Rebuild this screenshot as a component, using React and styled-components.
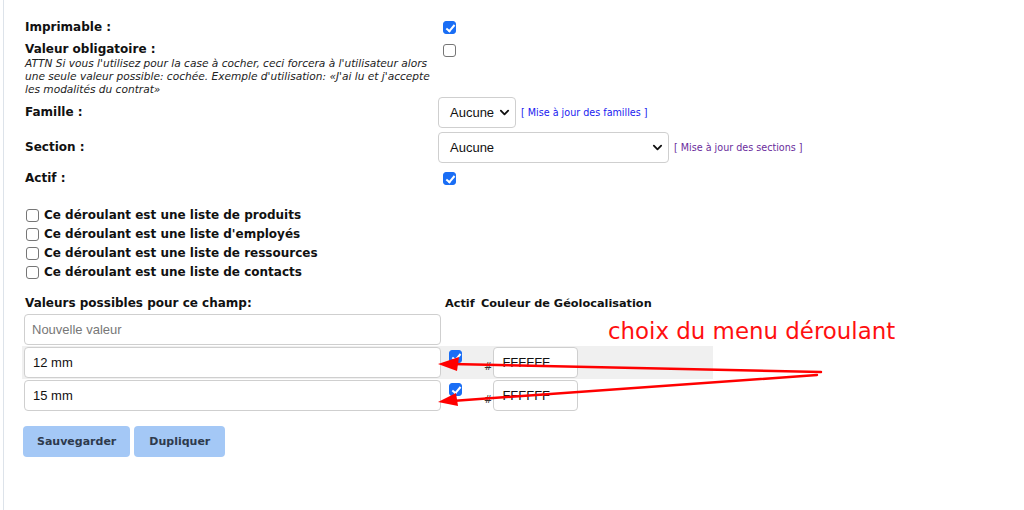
import React from "react";
import styled, { createGlobalStyle, css } from "styled-components";

const GlobalStyle = createGlobalStyle`
  html, body {
    margin: 0;
    padding: 0;
    background: #fff;
    font-family: "DejaVu Sans", Verdana, sans-serif;
    color: #111;
  }
`;

const Page = styled.div`
  position: relative;
  height: 510px;
  overflow: hidden;
  border-left: 1px solid #dde3ea;
  margin-left: 3px;
  padding: 19px 0 0 21px;
  box-sizing: border-box;
`;

const LeftStrip = styled.div`
  position: absolute;
  left: -4px;
  top: 130px;
  width: 3px;
  height: 1px;
  background: #d6dbe2;
`;

const FieldRow = styled.div`
  display: flex;
  align-items: ${(p) => (p.$top ? "flex-start" : "center")};
  min-height: ${(p) => p.$h || 0}px;
  margin-bottom: ${(p) => p.$gap || 0}px;
`;

const LabelCell = styled.div`
  width: 413px;
  flex: none;
`;

const Label = styled.div`
  font-weight: bold;
  font-size: 12px;
  line-height: 15px;
`;

const Hint = styled.div`
  font-style: italic;
  font-size: 10.6px;
  line-height: 12.8px;
  width: 408px;
  color: #222;
`;

const Check = styled.input.attrs({ type: "checkbox" })`
  appearance: none;
  width: 13px;
  height: 13px;
  margin: ${(p) => p.$m || "0"};
  border-radius: 3px;
  box-sizing: border-box;
  border: 1px solid #767676;
  background: #fff;
  flex: none;
  position: relative;
  ${(p) =>
    p.checked &&
    css`
      background: #1a6ef5;
      border-color: #1a6ef5;
      &::after {
        content: "";
        position: absolute;
        left: 3.5px;
        top: 0.5px;
        width: 3px;
        height: 7px;
        border: solid #fff;
        border-width: 0 2px 2px 0;
        transform: rotate(40deg);
      }
    `}
`;

const ControlCell = styled.div`
  display: flex;
  align-items: center;
  gap: 4px;
`;

const Select = styled.div`
  box-sizing: border-box;
  height: 31px;
  width: ${(p) => p.$w}px;
  border: 1px solid #cfcfcf;
  border-radius: 4px;
  background: #fff;
  display: flex;
  align-items: center;
  justify-content: space-between;
  padding: 0 5px 0 11px;
  font-family: "Liberation Sans", Arial, sans-serif;
  font-size: 13px;
  color: #111;
`;

const LinkText = styled.a`
  font-size: 9.6px;
  color: ${(p) => (p.$visited ? "#6a2c9c" : "#2020f0")};
  text-decoration: none;
  margin-left: 1px;
`;

const OptionList = styled.div`
  display: flex;
  flex-direction: column;
  gap: 6px;
  margin: 23px 0 0 1px;
`;

const OptionLabel = styled.label`
  display: flex;
  align-items: center;
  gap: 5px;
  font-weight: bold;
  font-size: 12px;
  line-height: 13px;
`;

const ValuesTable = styled.div`
  display: grid;
  grid-template-columns: 423px 36px 232px;
  margin: 17px 0 0 -3px;
  width: 691px;
`;

const HeadCell = styled.div`
  font-weight: bold;
  font-size: ${(p) => p.$fs || 12}px;
  line-height: 15px;
  padding: 0 0 2px ${(p) => p.$pl || 0}px;
`;

const ValueRow = styled.div`
  display: contents;
  & > div {
    background: ${(p) => (p.$hover ? "#f0f0f0" : "transparent")};
    padding: 1px 0;
  }
`;

const Cell = styled.div`
  display: flex;
  align-items: flex-start;
  padding-left: ${(p) => p.$pl || 0}px !important;
`;

const TextInput = styled.div`
  box-sizing: border-box;
  height: 31px;
  width: ${(p) => p.$w}px;
  border: 1px solid #cfcfcf;
  border-radius: 4px;
  background: #fff;
  display: flex;
  align-items: center;
  padding-left: ${(p) => p.$pl || 7}px;
  font-family: "Liberation Sans", Arial, sans-serif;
  font-size: 13px;
  color: ${(p) => (p.$placeholder ? "#777" : "#111")};
`;

const Hash = styled.span`
  font-size: 10px;
  color: #333;
  margin: 14px 1px 0 3px;
`;

const Buttons = styled.div`
  display: flex;
  gap: 4px;
  margin: 14px 0 0 -2px;
`;

const Button = styled.button`
  height: 31px;
  padding: 0 ${(p) => p.$px}px;
  border: none;
  border-radius: 4px;
  background: #a4c8f6;
  color: #2e3a4d;
  font-family: "DejaVu Sans", Verdana, sans-serif;
  font-weight: bold;
  font-size: 11px;
`;

const Note = styled.div`
  position: absolute;
  left: 604px;
  top: 318px;
  color: #ff0f0f;
  font-size: 22.9px;
`;

const Arrows = styled.svg`
  position: absolute;
  left: -4px;
  top: 0;
  pointer-events: none;
`;

const Chevron = () => (
  <svg width="11" height="11" viewBox="0 0 12 12">
    <path d="M2 4l4 4 4-4" fill="none" stroke="#111" strokeWidth="2" strokeLinecap="round" strokeLinejoin="round" />
  </svg>
);

export default function App() {
  return (
    <>
      <GlobalStyle />
      <Page>
        <LeftStrip />
        <FieldRow $h={17} $gap={6}>
          <LabelCell>
            <Label>Imprimable :</Label>
          </LabelCell>
          <ControlCell>
            <Check checked readOnly $m="0 0 0 5px" />
          </ControlCell>
        </FieldRow>

        <FieldRow $top $gap={2}>
          <LabelCell>
            <Label>Valeur obligatoire :</Label>
            <Hint>
              ATTN Si vous l'utilisez pour la case à cocher, ceci forcera à l'utilisateur alors une seule valeur
              possible: cochée. Exemple d'utilisation: «J'ai lu et j'accepte les modalités du contrat»
            </Hint>
          </LabelCell>
          <ControlCell>
            <Check readOnly $m="2px 0 0 5px" />
          </ControlCell>
        </FieldRow>

        <FieldRow $gap={4}>
          <LabelCell>
            <Label>Famille :</Label>
          </LabelCell>
          <ControlCell>
            <Select $w={78}>
              Aucune <Chevron />
            </Select>
            <LinkText href="#">[ Mise à jour des familles ]</LinkText>
          </ControlCell>
        </FieldRow>

        <FieldRow $gap={8}>
          <LabelCell>
            <Label>Section :</Label>
          </LabelCell>
          <ControlCell>
            <Select $w={231}>
              Aucune <Chevron />
            </Select>
            <LinkText href="#" $visited>
              [ Mise à jour des sections ]
            </LinkText>
          </ControlCell>
        </FieldRow>

        <FieldRow>
          <LabelCell>
            <Label>Actif :</Label>
          </LabelCell>
          <ControlCell>
            <Check checked readOnly $m="0 0 0 5px" />
          </ControlCell>
        </FieldRow>

        <OptionList>
          {["de produits", "d'employés", "de ressources", "de contacts"].map((t) => (
            <OptionLabel key={t}>
              <Check readOnly />
              Ce déroulant est une liste {t}
            </OptionLabel>
          ))}
        </OptionList>

        <ValuesTable>
          <HeadCell $pl={3}>Valeurs possibles pour ce champ:</HeadCell>
          <HeadCell $fs={11.3}>Actif</HeadCell>
          <HeadCell $fs={11.3}>Couleur de Géolocalisation</HeadCell>

          <ValueRow>
            <Cell $pl={2}>
              <TextInput $w={417} $placeholder>
                Nouvelle valeur
              </TextInput>
            </Cell>
            <Cell />
            <Cell />
          </ValueRow>

          {["12 mm", "15 mm"].map((v, i) => (
            <ValueRow key={v} $hover={i === 0}>
              <Cell $pl={2}>
                <TextInput $w={417} $pl={8}>
                  {v}
                </TextInput>
              </Cell>
              <Cell $pl={4}>
                <Check checked readOnly $m="3px 0 0 0" />
              </Cell>
              <Cell>
                <Hash>#</Hash>
                <TextInput $w={85} $pl={8}>
                  FFFFFF
                </TextInput>
              </Cell>
            </ValueRow>
          ))}
        </ValuesTable>

        <Buttons>
          <Button $px={14}>Sauvegarder</Button>
          <Button $px={15}>Dupliquer</Button>
        </Buttons>

        <Note>choix du menu déroulant</Note>
        <Arrows width="1024" height="510" viewBox="0 0 1024 510">
          <g stroke="#ff0000" strokeWidth="2.5" fill="none" strokeLinecap="round">
            <line x1="821" y1="372" x2="452" y2="364" />
            <line x1="817" y1="375" x2="452" y2="401" />
          </g>
          <g fill="#ff0000">
            <polygon points="438,364 459,357 457,371" />
            <polygon points="438,402 456,393 458,406" />
          </g>
        </Arrows>
      </Page>
    </>
  );
}
